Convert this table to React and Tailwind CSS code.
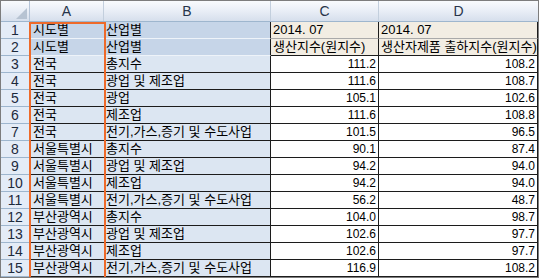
import React from 'react';

const rows = [
  ['시도별', '산업별', '2014. 07', '2014. 07'],
  ['시도별', '산업별', '생산지수(원지수)', '생산자제품 출하지수(원지수)'],
  ['전국', '총지수', '111.2', '108.2'],
  ['전국', '광업 및 제조업', '111.6', '108.7'],
  ['전국', '광업', '105.1', '102.6'],
  ['전국', '제조업', '111.6', '108.8'],
  ['전국', '전기,가스,증기 및 수도사업', '101.5', '96.5'],
  ['서울특별시', '총지수', '90.1', '87.4'],
  ['서울특별시', '광업 및 제조업', '94.2', '94.0'],
  ['서울특별시', '제조업', '94.2', '94.0'],
  ['서울특별시', '전기,가스,증기 및 수도사업', '56.2', '48.7'],
  ['부산광역시', '총지수', '104.0', '98.7'],
  ['부산광역시', '광업 및 제조업', '102.6', '97.7'],
  ['부산광역시', '제조업', '102.6', '97.7'],
  ['부산광역시', '전기,가스,증기 및 수도사업', '116.9', '108.2'],
];

const font = "font-['Liberation_Sans','Noto_Sans_CJK_KR',sans-serif]";

const App = () => {
  return (
    <div className={`w-[539px] h-[278px] overflow-hidden bg-white border border-[#7d7d7d] ${font}`}>
      {/* column headers */}
      <div className="flex h-[21px] bg-gradient-to-b from-[#f9fbfd] via-[#e9eef6] to-[#d6dfec] border-b border-[#9eb6ce] text-[14px] text-[#27344a]">
        <div className="relative w-[29px] shrink-0 border-r border-[#b5c4d7]">
          <div className="absolute right-[2px] bottom-[2px] w-0 h-0 border-l-[11px] border-l-transparent border-b-[11px] border-b-[#b7c3d2]" />
        </div>
        <div className="w-[74px] shrink-0 flex items-center justify-center border-r border-[#c3cfdd]">A</div>
        <div className="w-[167px] shrink-0 flex items-center justify-center border-r border-[#c3cfdd]">B</div>
        <div className="w-[108px] shrink-0 flex items-center justify-center border-r border-[#c3cfdd]">C</div>
        <div className="flex-1 flex items-center justify-center">D</div>
      </div>

      <div className="relative">
        {rows.map((r, i) => {
          const top = i < 2;
          const abBg = top ? 'bg-[#c6d5e8]' : 'bg-[#dce6f2]';
          const abLine = top ? 'border-b-[#eef3f9]' : 'border-b-[#1c1c1c]';
          const cdBg = top ? 'bg-[#f2ede3]' : 'bg-white';
          const cdLine = i === 0 ? 'border-b-[#a9a9a9]' : 'border-b-[#1c1c1c]';
          const cdText = top ? 'pl-[2px] text-[13px]' : 'pr-[2px] text-right text-[12px]';
          return (
            <div key={i} className="flex h-[17px] text-[13px] leading-[16px] text-black">
              <div className="w-[29px] shrink-0 bg-[#e4ecf7] border-r border-r-[#9eb6ce] border-b border-b-[#9eb6ce] text-center text-[14px] leading-[16px] text-[#1d2a3c]">
                {i + 1}
              </div>
              <div className={`w-[74px] shrink-0 pl-[3px] whitespace-nowrap overflow-hidden border-b ${abLine} ${abBg}`}>
                {r[0]}
              </div>
              <div className={`w-[167px] shrink-0 pl-[2px] whitespace-nowrap overflow-hidden border-r border-r-[#1c1c1c] border-b ${abLine} ${abBg}`}>
                {r[1]}
              </div>
              <div className={`w-[108px] shrink-0 whitespace-nowrap overflow-hidden border-r border-r-[#1c1c1c] border-b ${cdLine} ${cdBg} ${cdText}`}>
                {r[2]}
              </div>
              <div className={`flex-1 whitespace-nowrap overflow-hidden border-r border-r-[#1c1c1c] border-b ${cdLine} ${cdBg} ${cdText}`}>
                {r[3]}
              </div>
            </div>
          );
        })}
        {/* selection outline on column A */}
        <div className="absolute left-[28px] top-0 w-[77px] h-[260px] border-2 border-[#ee6a2a] pointer-events-none" />
      </div>
    </div>
  );
};

export default App;
